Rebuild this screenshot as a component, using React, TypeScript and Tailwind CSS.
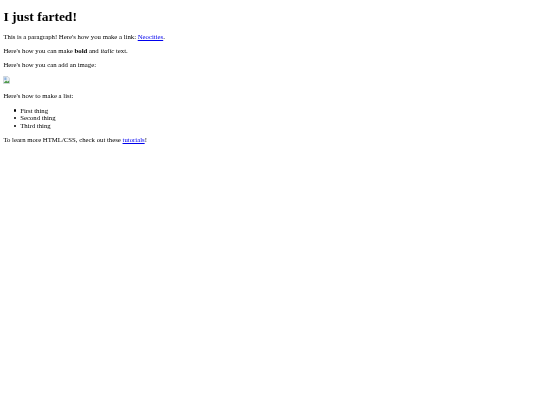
export default function App() {
  const linkClass = "text-[#0000ee] underline";
  const items = ["First thing", "Second thing", "Third thing"];
  return (
    <div className="min-h-[405px] bg-white px-[3.4px] pt-[1.5px] font-['Liberation_Serif',serif] text-[6.75px] leading-[7.6px] text-black [will-change:transform]">
      <h1 className="mt-[7px] mb-[9px] text-[13.5px] leading-[15.5px] font-bold">I just farted!</h1>
      <p className="my-[6.6px]">
        This is a paragraph! Here's how you make a link: <a href="#" className={linkClass}>Neocities</a>.
      </p>
      <p className="my-[6.6px]">
        Here's how you can make <strong className="font-bold">bold</strong> and <em className="italic">italic</em> text.
      </p>
      <p className="my-[6.6px]">Here's how you can add an image:</p>
      <p className="mt-[7.4px] mb-[6.8px] h-[8.4px]">
        <svg width="7" height="8" viewBox="0 0 16 18" className="block">
          <path d="M1 1h10l4 4v12H1z" fill="#e8edf2" stroke="#a4adb5" strokeWidth="1" />
          <path d="M2 15l5-5 3 3 4-3v6H2z" fill="#4f9a4a" />
          <path d="M3 3h5v6H3z" fill="#8fb4e0" />
        </svg>
      </p>
      <p className="my-[6.6px]">Here's how to make a list:</p>
      <ul className="mt-[7.6px] mb-[5.6px] pl-[10.4px]">
        {items.map((item) => (
          <li key={item} className="flex items-center gap-[4px]">
            <span className="h-[2.4px] w-[2.4px] rounded-full bg-black" />
            {item}
          </li>
        ))}
      </ul>
      <p className="my-[6.6px]">
        To learn more HTML/CSS, check out these <a href="#" className={linkClass}>tutorials</a>!
      </p>
    </div>
  );
}
